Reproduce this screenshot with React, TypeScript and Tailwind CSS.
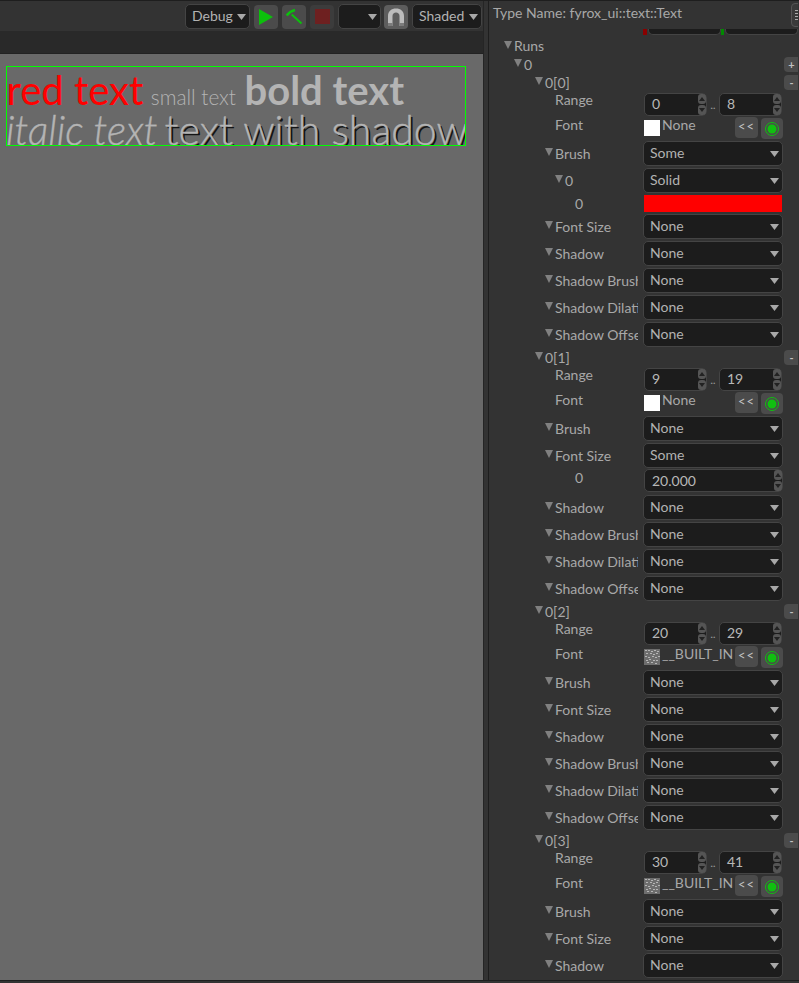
import type { ReactNode } from 'react'

const font = "font-['Lato','Liberation_Sans',sans-serif]"

function Caret({ className = 'text-[#a8a8a8]' }: { className?: string }) {
  return (
    <svg width="9" height="6" viewBox="0 0 9 6" className={className}>
      <path d="M0 0H9L4.5 6Z" fill="currentColor" />
    </svg>
  )
}

function Arrow() {
  return (
    <svg width="8" height="8" viewBox="0 0 8 8" className="mr-[2px] mt-[-3px] shrink-0">
      <path d="M0 0H8L4 8Z" fill="#808080" />
    </svg>
  )
}

function Dropdown({ value, className = 'w-[140px]' }: { value?: string; className?: string }) {
  return (
    <div className={`flex h-[25px] items-center justify-between rounded-[5px] border border-[#444] bg-[#1c1c1c] pl-[6px] pr-[3px] text-[14px] leading-none text-[#b2b2b2] ${className}`}>
      <span className="mt-[-2px]">{value}</span>
      <Caret />
    </div>
  )
}

function Label({ text, indent, arrow }: { text: string; indent: string; arrow?: boolean }) {
  return (
    <div className={`flex h-full w-[149px] shrink-0 items-center overflow-hidden whitespace-nowrap text-[14px] leading-none text-[#a8a8a8] ${indent}`}>
      {arrow && <Arrow />}
      <span>{text}</span>
    </div>
  )
}

function Prop({ text, value = 'None', indent = 'pl-[56px]' }: { text: string; value?: string; indent?: string }) {
  return (
    <div className="flex h-[27px] items-center">
      <Label text={text} indent={indent} arrow />
      <div className="ml-[5px]">
        <Dropdown value={value} />
      </div>
    </div>
  )
}

function Spinner() {
  return (
    <div className="flex flex-col gap-[1px]">
      <div className="flex h-[10px] w-[8px] items-center justify-center rounded-[3px] bg-[#555]">
        <svg width="6" height="4" viewBox="0 0 6 4"><path d="M0 4H6L3 0Z" fill="#222" /></svg>
      </div>
      <div className="flex h-[10px] w-[8px] items-center justify-center rounded-[3px] bg-[#555]">
        <svg width="6" height="4" viewBox="0 0 6 4"><path d="M0 0H6L3 4Z" fill="#222" /></svg>
      </div>
    </div>
  )
}

function NumberField({ value, className }: { value: string; className: string }) {
  return (
    <div className={`flex h-[23px] items-center justify-between rounded-[5px] border border-[#444] bg-[#1c1c1c] pl-[7px] text-[14px] leading-none text-[#b8b8b8] ${className}`}>
      <span>{value}</span>
      <Spinner />
    </div>
  )
}

function RangeRow({ from, to }: { from: string; to: string }) {
  return (
    <div className="flex h-[25px]">
      <div className="h-[18px]">
        <Label text="Range" indent="pl-[66px]" />
      </div>
      <div className="ml-[6px] mt-[1px] flex items-center">
        <NumberField value={from} className="w-[63px]" />
        <span className="mx-[3px] mt-[2px] w-[6px] text-center text-[10px] font-bold leading-none text-[#999]">..</span>
        <NumberField value={to} className="w-[63px]" />
      </div>
    </div>
  )
}

// noisy thumbnail of the built-in font atlas
function AtlasThumb() {
  const cells = [
    [1, 1], [4, 1], [7, 2], [10, 1], [13, 2], [2, 4], [6, 4], [9, 5], [12, 4],
    [1, 7], [4, 8], [8, 7], [11, 8], [14, 7], [2, 11], [5, 10], [9, 11], [12, 11], [3, 13], [7, 13], [11, 14],
  ]
  return (
    <svg width="16" height="16" viewBox="0 0 16 16" className="shrink-0">
      <rect width="16" height="16" fill="#6e6e6e" />
      {cells.map(([x, y]) => (
        <rect key={`${x}-${y}`} x={x} y={y} width="2" height="1" fill="#b5b5b5" />
      ))}
    </svg>
  )
}

function FontRow({ builtin }: { builtin?: boolean }) {
  return (
    <div className="flex h-[24px]">
      <div className="h-[18px]">
        <Label text="Font" indent="pl-[66px]" />
      </div>
      <div className="relative ml-[6px] flex w-[139px] pt-[4px]">
        {builtin ? <AtlasThumb /> : <div className="h-[16px] w-[16px] shrink-0 bg-white" />}
        <span className="ml-[2px] mt-[-4px] text-[14px] leading-[18px] text-[#a8a8a8]">
          {builtin ? '__BUILT_IN' : 'None'}
        </span>
        <div className="absolute right-[25px] top-[1px] flex h-[21px] w-[23px] items-center justify-center rounded-[4px] bg-[#4b4b4b] pb-[3px] text-[13px] leading-none tracking-[1px] text-[#c4c4c4]">
          {'<<'}
        </div>
        <div className="absolute right-0 top-[2px] flex h-[21px] w-[22px] items-center justify-center rounded-[4px] bg-[#4b4b4b]">
          <svg width="16" height="16" viewBox="0 0 16 16">
            <circle cx="8" cy="8" r="6.5" fill="none" stroke="#10c010" strokeWidth="1" />
            <circle cx="8" cy="8" r="4.5" fill="#10c010" />
          </svg>
        </div>
      </div>
    </div>
  )
}

function SmallButton({ children }: { children: ReactNode }) {
  return (
    <div className="mr-[-1px] flex h-[15px] w-[15px] items-center justify-center rounded-l-[4px] bg-[#4b4b4b] text-[11px] font-bold leading-none text-[#c0c0c0]">
      {children}
    </div>
  )
}

function SectionHead({ text }: { text: string }) {
  return (
    <div className="flex h-[18px] items-center justify-between pt-[1px]">
      <Label text={text} indent="pl-[46px]" arrow />
      <SmallButton>-</SmallButton>
    </div>
  )
}

function ToolButton({ children, className = 'bg-[#4b4b4b]' }: { children: ReactNode; className?: string }) {
  return (
    <div className={`flex h-[24px] w-[24px] items-center justify-center rounded-[4px] ${className}`}>
      {children}
    </div>
  )
}

function Toolbar() {
  return (
    <div className="flex h-[30px] items-center justify-end gap-[4px] bg-[#333] pb-[1px] pr-[1px] pt-[2px]">
      <Dropdown value="Debug" className="w-[65px]" />
      <ToolButton>
        <svg width="16" height="18" viewBox="0 0 16 18"><path d="M1 1L15 9L1 17Z" fill="#0cc00c" /></svg>
      </ToolButton>
      <ToolButton>
        <svg width="18" height="18" viewBox="0 0 18 18" fill="none" stroke="#0cc00c">
          <path d="M6.7 6.5L16.5 15.5" strokeWidth="2" />
          <path d="M1.7 7.5C3.5 5 6 3 10 2" strokeWidth="2.5" />
        </svg>
      </ToolButton>
      <ToolButton className="bg-[#3c3c3c]">
        <div className="h-[15px] w-[15px] bg-[#6e2020]" />
      </ToolButton>
      <Dropdown className="w-[43px]" />
      <ToolButton className="ml-[-1px] bg-[#5d5d5d]">
        <svg width="20" height="22" viewBox="0 0 20 22">
          <path d="M2 20V10C2 5 5.5 2.5 10 2.5S18 5 18 10V20H13.5V10C13.5 8 12 6.5 10 6.5S6.5 8 6.5 10V20Z" fill="#bcbcbc" />
          <path d="M2 20H6.5V17H2ZM13.5 20H18V17H13.5Z" fill="#7c7c7c" />
        </svg>
      </ToolButton>
      <Dropdown value="Shaded" className="w-[70px]" />
    </div>
  )
}

function Viewport() {
  return (
    <div className="flex-1 bg-[#696969] pl-[6px] pt-[12px]">
      <div className="h-[80px] w-[460px] overflow-hidden whitespace-nowrap border border-[#00ff00] text-[40px] leading-[39px] text-[#b4b4b4]">
        <div className="ml-[-0.5px] mt-[4px] h-[38.5px]">
          <span className="text-[#ff0000]">red text</span>
          <span className="text-[29px]"> </span>
          <span className="text-[20.8px] font-light">small text</span>
          <span className="text-[33px]"> </span>
          <span className="font-bold">bold text</span>
        </div>
        <div className="ml-[-1px] text-[40.6px] font-light [-webkit-text-stroke:0.4px_#b4b4b4]">
          <span className="italic">italic text</span>
          <span className="text-[26px]"> </span>
          <span className="text-[41px] [text-shadow:2px_2px_0_#141414]">text with shadow</span>
        </div>
      </div>
    </div>
  )
}

function InspectorHeader() {
  return (
    <>
      <div className="relative flex h-[26px] items-center pl-[4px] text-[14px] leading-none text-[#a8a8a8]">
        <span className="mt-[-2px]">Type Name: fyrox_ui::text::Text</span>
        <div className="absolute left-[302px] top-[2px] flex h-[24px] w-[12px] flex-col gap-[2px] rounded-l-[4px] border border-[#555] bg-[#3a3a3a] pl-[3px] pt-[6px]">
          <div className="h-[1px] bg-[#aaa]" />
          <div className="h-[1px] bg-[#aaa]" />
          <div className="h-[1px] bg-[#aaa]" />
          <div className="h-[1px] bg-[#aaa]" />
        </div>
      </div>
      {/* bottom of the scrolled out colour fields */}
      <div className="flex h-[10px] items-start pl-[154px] pt-[2px]">
        <div className="h-[6px] w-[4px] bg-[#8a0000]" />
        <div className="ml-[1px] h-[6px] w-[73px] rounded-b-[5px] border border-t-0 border-[#444] bg-[#1c1c1c]" />
        <div className="h-[6px] w-[4px] bg-[#008a00]" />
        <div className="ml-[1px] h-[6px] w-[73px] rounded-b-[5px] border border-t-0 border-[#444] bg-[#1c1c1c]" />
      </div>
    </>
  )
}

function Inspector() {
  return (
    <div className="w-[310px] overflow-hidden border-l border-[#1e1e1e] bg-[#333] pb-[3px]">
      <InspectorHeader />
      <div className="flex h-[18px] items-center">
        <Label text="Runs" indent="pl-[15px]" arrow />
      </div>
      <div className="flex h-[18px] items-center justify-between pt-[1px]">
        <Label text="0" indent="pl-[25px]" arrow />
        <SmallButton>+</SmallButton>
      </div>

      <SectionHead text="0[0]" />
      <RangeRow from="0" to="8" />
      <FontRow />
      <Prop text="Brush" value="Some" />
      <Prop text="0" value="Solid" indent="pl-[66px]" />
      <div className="flex h-[19px] items-center">
        <Label text="0" indent="pl-[86px]" />
        <div className="ml-[6px] h-[17px] w-[138px] bg-[#ff0000]" />
      </div>
      <Prop text="Font Size" />
      <Prop text="Shadow" />
      <Prop text="Shadow Brush" />
      <Prop text="Shadow Dilation" />
      <Prop text="Shadow Offset" />

      <SectionHead text="0[1]" />
      <RangeRow from="9" to="19" />
      <FontRow />
      <Prop text="Brush" />
      <Prop text="Font Size" value="Some" />
      <div className="flex h-[25px]">
        <div className="h-[18px]">
          <Label text="0" indent="pl-[86px]" />
        </div>
        <div className="ml-[6px]">
          <NumberField value="20.000" className="w-[139px]" />
        </div>
      </div>
      <Prop text="Shadow" />
      <Prop text="Shadow Brush" />
      <Prop text="Shadow Dilation" />
      <Prop text="Shadow Offset" />

      <SectionHead text="0[2]" />
      <RangeRow from="20" to="29" />
      <FontRow builtin />
      <Prop text="Brush" />
      <Prop text="Font Size" />
      <Prop text="Shadow" />
      <Prop text="Shadow Brush" />
      <Prop text="Shadow Dilation" />
      <Prop text="Shadow Offset" />

      <SectionHead text="0[3]" />
      <RangeRow from="30" to="41" />
      <FontRow builtin />
      <Prop text="Brush" />
      <Prop text="Font Size" />
      <Prop text="Shadow" />
    </div>
  )
}

export default function App() {
  return (
    <div className={`flex h-[983px] w-[799px] flex-col overflow-hidden bg-[#333] ${font}`}>
      <div className="h-[1px] bg-[#1e1e1e]" />
      <div className="flex h-[979px] min-h-0">
        <div className="flex w-[483px] flex-col">
          <Toolbar />
          <div className="h-[22px] bg-[#292929]" />
          <div className="h-[1px] bg-[#222]" />
          <Viewport />
        </div>
        <div className="w-[5px] border-l border-[#252525]" />
        <Inspector />
      </div>
      <div className="flex-1 border-t border-[#1e1e1e] bg-[#333]" />
    </div>
  )
}
